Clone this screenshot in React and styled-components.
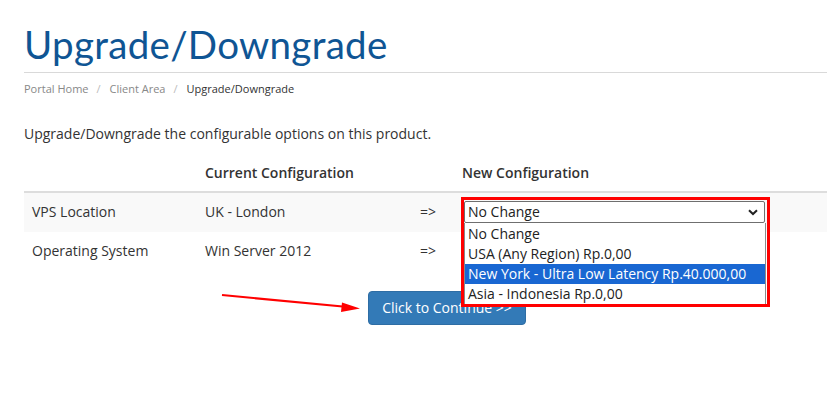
import React from "react";
import styled, { createGlobalStyle } from "styled-components";

const GlobalStyle = createGlobalStyle`
  html, body { margin: 0; padding: 0; background: #fff; overflow: hidden; }
  body { font-family: "Open Sans", "Liberation Sans", sans-serif; color: #333; font-size: 14px; }
`;

const Page = styled.div`
  position: relative;
  width: 846px;
  margin-left: 24px;
`;

const Title = styled.h1`
  margin: 0;
  padding-top: 23px;
  padding-bottom: 6px;
  font-family: "Lato", "Liberation Sans", sans-serif;
  font-weight: 400;
  font-size: 38.5px;
  line-height: 43px;
  color: #0f5594;
  border-bottom: 1px solid #d9d9d9;
  letter-spacing: 0.3px;
`;

const Crumbs = styled.ol`
  list-style: none;
  margin: 8px 0 0;
  padding: 0;
  display: flex;
  font-size: 11px;
  line-height: 16px;
  & > li + li::before {
    content: "/";
    color: #bbb;
    padding: 0 9px 0 8px;
  }
`;

const Crumb = styled.li`
  color: ${(p) => (p.$active ? "#333" : "#888")};
`;

const Intro = styled.p`
  margin: 27px 0 11px;
  font-size: 14px;
  line-height: 20px;
  color: #333;
`;

const Table = styled.table`
  width: 100%;
  border-collapse: collapse;
  table-layout: fixed;
`;

const Th = styled.th`
  text-align: left;
  font-weight: 600;
  padding: 8px;
  line-height: 20px;
  border-bottom: 2px solid #ddd;
  color: #333;
`;

const Tr = styled.tr`
  background: ${(p) => (p.$striped ? "#f9f9f9" : "transparent")};
  & + & td { border-top: 1px solid #ddd; }
`;

const Td = styled.td`
  padding: ${(p) => (p.$control ? "8px 8px 9px" : "9px 8px 10px")};
  line-height: 20px;
  vertical-align: middle;
  color: #333;
`;

const SelectWrap = styled.div`
  position: relative;
  width: 301px;
  margin-left: 2px;
`;

const SelectBox = styled.div`
  box-sizing: border-box;
  height: 22px;
  border: 1px solid #6f6f6f;
  border-radius: 2px;
  background: #fff;
  display: flex;
  align-items: center;
  justify-content: space-between;
  padding: 0 6px 0 3px;
  font-size: 14px;
  color: #222;
`;

const OptionList = styled.div`
  position: absolute;
  top: 22px;
  left: 0;
  width: 302px;
  box-sizing: border-box;
  padding-top: 1px;
  border: 1px solid #8a8a8a;
  border-top: none;
  background: #fff;
  z-index: 2;
`;

const Option = styled.div`
  height: 20px;
  line-height: 20px;
  padding-left: 3px;
  font-size: 14px;
  white-space: nowrap;
  color: ${(p) => (p.$selected ? "#fff" : "#222")};
  background: ${(p) => (p.$selected ? "#1967d2" : "transparent")};
`;

const RedBox = styled.div`
  position: absolute;
  left: -3px;
  top: -4px;
  width: 309px;
  height: 110px;
  box-sizing: border-box;
  border: 3px solid #f00;
  z-index: 3;
  pointer-events: none;
`;

const Actions = styled.div`
  display: flex;
  justify-content: center;
  margin-top: 20px;
`;

const Button = styled.button`
  font-family: "Open Sans", "Liberation Sans", sans-serif;
  font-size: 14px;
  line-height: 20px;
  padding: 6px 13px;
  height: 34px;
  color: #fff;
  background: #337ab7;
  border: 1px solid #2e6da4;
  border-radius: 4px;
`;

const Arrow = styled.svg`
  position: absolute;
  left: 194px;
  top: 290px;
  z-index: 4;
`;

const Chevron = () => (
  <svg width="10" height="7" viewBox="0 0 10 7">
    <path d="M1 1.2 L5 5 L9 1.2" fill="none" stroke="#222" strokeWidth="2" />
  </svg>
);

const options = [
  "No Change",
  "USA (Any Region) Rp.0,00",
  "New York - Ultra Low Latency Rp.40.000,00",
  "Asia - Indonesia Rp.0,00",
];

export default function App() {
  return (
    <>
      <GlobalStyle />
      <Page>
        <Title>Upgrade/Downgrade</Title>
        <Crumbs>
          <Crumb>Portal Home</Crumb>
          <Crumb>Client Area</Crumb>
          <Crumb $active>Upgrade/Downgrade</Crumb>
        </Crumbs>
        <Intro>Upgrade/Downgrade the configurable options on this product.</Intro>
        <Table>
          <colgroup>
            <col style={{ width: 173 }} />
            <col style={{ width: 215 }} />
            <col style={{ width: 42 }} />
            <col />
          </colgroup>
          <thead>
            <tr>
              <Th></Th>
              <Th>Current Configuration</Th>
              <Th></Th>
              <Th>New Configuration</Th>
            </tr>
          </thead>
          <tbody>
            <Tr $striped>
              <Td>VPS Location</Td>
              <Td>UK - London</Td>
              <Td>=&gt;</Td>
              <Td $control>
                <SelectWrap>
                  <SelectBox>
                    <span>No Change</span>
                    <Chevron />
                  </SelectBox>
                  <OptionList>
                    {options.map((o, i) => (
                      <Option key={o} $selected={i === 2}>{o}</Option>
                    ))}
                  </OptionList>
                  <RedBox />
                </SelectWrap>
              </Td>
            </Tr>
            <Tr>
              <Td>Operating System</Td>
              <Td>Win Server 2012</Td>
              <Td>=&gt;</Td>
              <Td></Td>
            </Tr>
          </tbody>
        </Table>
        <Actions>
          <Button>Click to Continue &gt;&gt;</Button>
        </Actions>
        <Arrow width="150" height="26" viewBox="0 0 150 26">
          <line x1="4" y1="5" x2="130" y2="17" stroke="#f00" strokeWidth="2.2" />
          <path d="M124 12.5 L142 18.5 L123 22 Z" fill="#f00" />
        </Arrow>
      </Page>
    </>
  );
}
